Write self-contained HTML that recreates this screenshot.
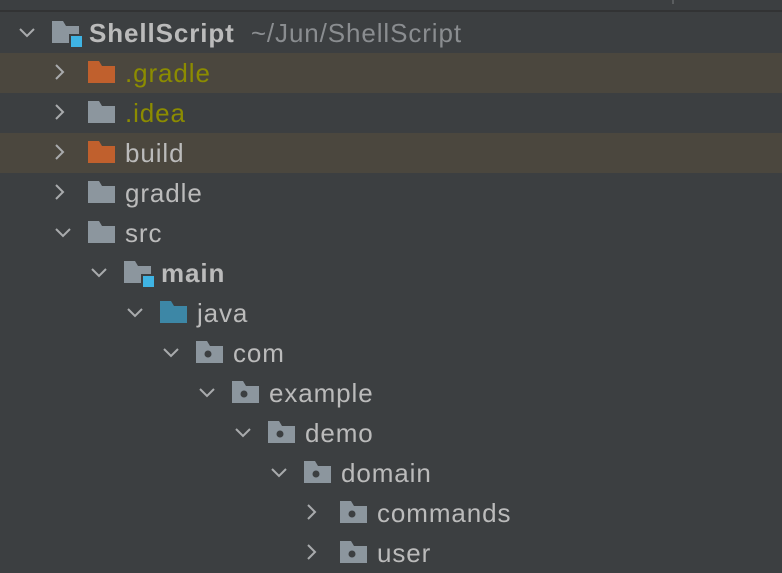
<!DOCTYPE html>
<html><head><style>
body{margin:0;width:782px;height:570px;background:#3c3f41;overflow:hidden;font-family:"Liberation Sans",sans-serif;}
.top{position:absolute;left:0;top:0;width:782px;height:10px;background:#3c3f41;border-bottom:2px solid #323334}
.row{position:absolute;left:0;width:782px;height:40px;}
.hl{background:#4b473e}
.t{position:absolute;top:6px;font-size:26px;letter-spacing:0.9px;color:#bbbbbb;line-height:28px;white-space:nowrap}
svg{position:absolute}
</style></head><body>
<div class="top"></div>
<div style="position:absolute;left:672px;top:0;width:2px;height:4px;background:#5a5d5f"></div>
<div id="c"></div>
<script>
const rows=[
[0,'ShellScript','mod','down',1],
[1,'.gradle','orange','right',0,'#8c8c00',1],
[1,'.idea','gray','right',0,'#8c8c00'],
[1,'build','orange','right',0,null,1],
[1,'gradle','gray','right'],
[1,'src','gray','down'],
[2,'main','mod','down',1],
[3,'java','blue','down'],
[4,'com','pkg','down'],
[5,'example','pkg','down'],
[6,'demo','pkg','down'],
[7,'domain','pkg','down'],
[8,'commands','pkg','right'],
[8,'user','pkg','right'],
];
let h='';
rows.forEach((r,i)=>{
 const [lv,name,ic,ch,bold,col,hl]=r;
 const y=13+i*40;const x0=lv*36;
 h+=`<div class="row${hl?' hl':''}" style="top:${y}px">`;
 if(ch=='down') h+=`<svg style="left:${x0+18}px;top:12px" width="20" height="16"><path d="M2 4 L9 11 L16 4" stroke="#a9abad" stroke-width="2" fill="none"/></svg>`;
 else h+=`<svg style="left:${x0+17}px;top:10px" width="14" height="20"><path d="M3 2 L10 9 L3 16" stroke="#a9abad" stroke-width="2" fill="none"/></svg>`;
 let fill={gray:'#8c969e',orange:'#c0602d',blue:'#3d87a6',mod:'#8c969e',pkg:'#8c969e'}[ic];
 const ix = x0+52;
 h+=`<svg style="left:${ix}px;top:8px" width="36" height="28"><path d="M0 0 H11 L14 5 H27 V22 H0 Z" fill="${fill}"/>`;
 if(ic=='mod') h+=`<rect x="17" y="13" width="13" height="13" fill="#3c3f41"/><rect x="19" y="15" width="11" height="11" fill="#3fb4e4"/>`;
 if(ic=='pkg') h+=`<circle cx="12" cy="13" r="3.5" fill="#3c3f41"/>`;
 h+=`</svg>`;
 const tx=ix+37;
 h+=`<div class="t" style="left:${tx}px;${bold?'font-weight:bold;':''}${col?'color:'+col:''}">${name}${i==0?' <span style="font-weight:normal;color:#8a8d90;margin-left:8px">~/Jun/ShellScript</span>':''}</div></div>`;
});
document.getElementById('c').innerHTML=h;
</script>
</body></html>
